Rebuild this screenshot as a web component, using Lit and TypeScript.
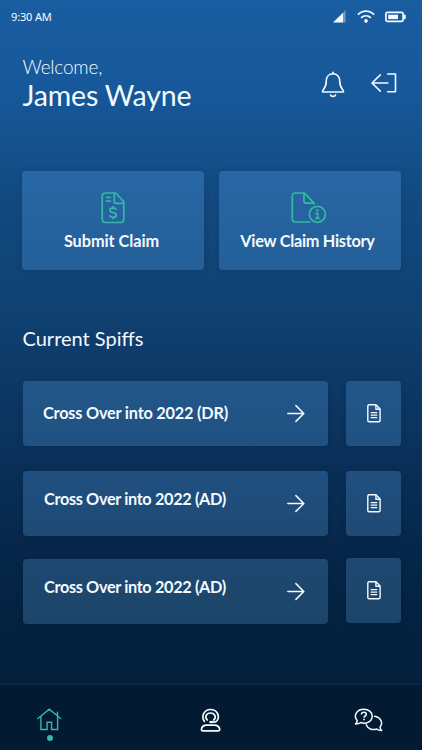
import { LitElement, html, css, svg } from "lit";
import { customElement, property } from "lit/decorators.js";

const icons: Record<string, { w: number; h: number; body: unknown }> = {
  signal: {
    w: 13, h: 13,
    body: svg`<path d="M0 12.500 10 2.700V12.500Z" fill="currentColor"/><path d="M10 2.700 12.600.1V12.500H10Z" fill="currentColor" opacity=".38"/>`,
  },
  wifi: {
    w: 18, h: 13,
    body: svg`<g fill="none" stroke="currentColor" stroke-width="1.8"><path d="M.9 4.700C5.400-.1 12.600-.1 17.100 4.700"/><path d="M4.100 7.900c2.900-2.800 6.900-2.800 9.800 0"/></g><circle cx="9" cy="10.900" r="1.800" fill="currentColor"/>`,
  },
  battery: {
    w: 21, h: 11,
    body: svg`<rect x=".9" y=".4" width="17.200" height="9" rx="1.600" fill="none" stroke="currentColor" stroke-width="1.700"/><path d="M3.200 2.700h9.800v4.400H3.200z" fill="currentColor"/><path d="M18.500 2.500h1.200q1 0 1 1v2.800q0 1-1 1h-1.200z" fill="currentColor"/>`,
  },
  bell: {
    w: 24, h: 27,
    body: svg`<g fill="none" stroke="currentColor" stroke-width="1.600" stroke-linecap="round" stroke-linejoin="round"><path d="M12 2.800c-4 0-6.700 2.900-6.700 6.900 0 5.500-1.200 6.900-2.900 8.900-1.100 1.300-1.300 2.400.1 2.400h19c1.400 0 1.200-1.100.1-2.400-1.700-2-2.900-3.400-2.900-8.900 0-4-2.700-6.900-6.700-6.900Z"/><path d="M12 2.700V1.200"/><path d="M9.500 24c.5 1.900 4.500 1.900 5 0"/></g>`,
  },
  logout: {
    w: 26, h: 20,
    body: svg`<path d="M1 10h15.800M9.300 1.900 1 10l8.300 8.100M16.600 1h7.900v17.700h-7.900" fill="none" stroke="currentColor" stroke-width="1.600" stroke-linecap="round" stroke-linejoin="round"/>`,
  },
  invoice: {
    w: 24, h: 32,
    body: svg`<path d="M4.500 1h10.300L22.800 9.800V27.200q0 3.300-3.300 3.300h-15Q1.200 30.500 1.200 27.200v-22.900Q1.200 1 4.500 1ZM13.300 1.300v9q0 1 1 1H22.700M4.800 5.400h5M4.800 9.200h5" fill="none" stroke="currentColor" stroke-width="1.700" stroke-linejoin="round"/><path d="M15.200 17.800c-.4-1.300-1.700-1.800-3.100-1.800-1.900 0-3.200.9-3.200 2.300 0 3.300 6.500 1.300 6.500 4.700 0 1.500-1.400 2.300-3.300 2.300-1.700 0-3-.7-3.400-2.100M12.100 14v2M12.100 25.300v2" fill="none" stroke="currentColor" stroke-width="1.800"/>`,
  },
  history: {
    w: 36, h: 32,
    body: svg`<g fill="none" stroke="currentColor" stroke-width="1.700" stroke-linejoin="round" stroke-linecap="round"><path d="M18.800 30H4.200Q1.300 30 1.300 27V4q0-3 3-3h9.200L23 11.200v.8M13 1.200v7.500q0 2.500 2.500 2.500h7"/><circle cx="26.400" cy="22.300" r="8"/></g><circle cx="26.300" cy="18.300" r="1.200" fill="currentColor"/><path d="M24.400 21.300h2.200v4.700M24.100 26.300h4.700" fill="none" stroke="currentColor" stroke-width="1.700"/>`,
  },
  arrow: {
    w: 18, h: 18,
    body: svg`<path d="M.8 8.500h15.800M8.900.6l7.900 7.900-7.900 7.900" fill="none" stroke="currentColor" stroke-width="1.500" stroke-linecap="round" stroke-linejoin="round"/>`,
  },
  doc: {
    w: 14, h: 19,
    body: svg`<path d="M2 .8h7l4.100 4.200v11.300q0 1.500-1.200 1.500H2Q.8 17.800.8 16.300V2.200Q.8.800 2 .800ZM8.900 1v4.200h4.200" fill="none" stroke="currentColor" stroke-width="1.400" stroke-linejoin="round"/><path d="M3.700 8.700h6.500M3.700 11.200h6.500M3.700 13.700h6.500" stroke="currentColor" stroke-width="1.200"/>`,
  },
  home: {
    w: 25, h: 23,
    body: svg`<path d="M.9 10.500 12.200 1.200 23.700 10.500M3.900 8.900v12.600h6.200v-7.300h4.500v7.300h6V8.500M20.500 7V4.200" fill="none" stroke="currentColor" stroke-width="1.400" stroke-linejoin="miter" stroke-linecap="round"/>`,
  },
  support: {
    w: 22, h: 25,
    body: svg`<g fill="none" stroke="currentColor" stroke-width="1.700" stroke-linecap="round" stroke-linejoin="round"><path d="M4.400 13.300C.6 8 4.500 1.500 10.600 1.500c6.100 0 9.700 6.200 6.500 11.100-.8 1.200-1.900 1.500-3.300 1.500H11.500"/><path d="M7.300 12C4.300 9.200 6.300 5 10.500 5s6.300 4.300 3.300 7"/><path d="M2.800 22.800h15.400c1.800 0 1.700-1.400 1.200-2.600-.8-2.200-2.400-3.100-4.500-3.100H6c-2.200 0-3.600.9-4.300 3.100-.4 1.200-.7 2.600 1.100 2.600Z"/></g><ellipse cx="11.200" cy="14" rx="2" ry="1.300" fill="currentColor"/>`,
  },
  chat: {
    w: 29, h: 24,
    body: svg`<g fill="none" stroke="currentColor" stroke-width="1.500" stroke-linejoin="round" stroke-linecap="round"><path d="M3.200 12.600C-.9 8 2.500 1.200 9.800 1.200c4.800 0 8.400 3 8.400 7 0 5.200-6 8.400-11.500 6.300-1.400 1.200-3.200 1.700-5.200 1.600 1-1 1.600-2.100 1.700-3.500Z"/><path d="M20.600 8.300c5.900.6 9 6.700 5.400 10.900.1 1.300.7 2.400 1.700 3.200-1.900.1-3.700-.3-5.100-1.400-4.300 1.600-8.700-.1-10.400-4.200"/></g><path d="M7.400 6.500c.1-1.500 1.100-2.200 2.500-2.200s2.400.8 2.400 2c0 1.700-2.300 1.700-2.300 3.400M10 10.800v1.500" fill="none" stroke="currentColor" stroke-width="1.600"/>`,
  },
};

@customElement("ui-icon")
class UiIcon extends LitElement {
  @property() name = "";
  static styles = css`
    :host { display: inline-flex; flex: none; }
    svg { display: block; overflow: visible; }
  `;
  render() {
    const i = icons[this.name];
    return i
      ? html`<svg width=${i.w} height=${i.h} viewBox="0 0 ${i.w} ${i.h}" aria-hidden="true">${i.body}</svg>`
      : null;
  }
}

@customElement("app-root")
class AppRoot extends LitElement {
  static styles = css`
    :host {
      display: flex;
      flex-direction: column;
      box-sizing: border-box;
      height: 750px;
      overflow: hidden;
      color: #f4faff;
      font-family: Lato, sans-serif;
      background: linear-gradient(#195ea1 0, #17589a 90px, #124a80 200px, #0f4070 320px, #0a315a 450px, #06274a 550px, #03203d 650px, #03203c 684px);
    }
    .status {
      display: flex;
      align-items: center;
      height: 34px;
      padding: 0 16px 0 11px;
      font: 11px/34px "Noto Sans", sans-serif;
      letter-spacing: -0.15px;
    }
    .time { flex: 1; }
    .signal { margin: -2px 11px 0 0; }
    .wifi { margin: -1px 10px 0 0; }
    .header {
      display: flex;
      height: 90px;
      padding: 20px 25px 0 23px;
      box-sizing: border-box;
    }
    .greeting { flex: 1; white-space: nowrap; }
    .welcome { font-size: 19px; font-weight: 300; line-height: 26px; letter-spacing: -0.2px; margin-left: -0.5px; }
    .name { font-size: 28.5px; line-height: 32px; letter-spacing: -0.17px; margin: -1px 0 0 -0.5px; }
    .actions { display: flex; gap: 26px; padding-top: 17px; align-items: flex-start; }
    .actions .exit { margin-top: 2px; }
    .tiles {
      display: grid;
      grid-template-columns: 1fr 1fr;
      gap: 15px;
      margin: 46.5px 21px 0 22px;
    }
    .tile, .row, .file {
      border-radius: 4px;
      box-shadow: 0 0 6px rgba(0, 20, 50, 0.14);
    }
    .tile {
      display: flex;
      flex-direction: column;
      align-items: center;
      box-sizing: border-box;
      height: 99.5px;
      padding-top: 21px;
      background: linear-gradient(#2767a5, #245f98);
      font-size: 16.3px;
      font-weight: 700;
      line-height: 20px;
      white-space: nowrap;
    }
    .tile ui-icon { color: #35b8a3; margin-bottom: 7px; }
    .tile span { margin-right: 3px; }
    .tile.submit ui-icon { margin-right: 1px; }
    .tile.submit span { letter-spacing: -0.05px; }
    .tile.view ui-icon { margin-right: 3px; }
    .tile.view span { margin-right: 5px; letter-spacing: -0.27px; }
    h2 { margin: 54px 0 0 22.5px; font-size: 20px; font-weight: 400; line-height: 28px; }
    .list {
      display: grid;
      row-gap: 25px;
      margin: 29px 21px 0 23px;
    }
    .item { display: grid; grid-template-columns: 305px 55px; column-gap: 18.4px; height: 65px; }
    .item.last { margin-top: -2px; }
    .row, .file { display: flex; align-items: center; height: 65px; box-sizing: border-box; }
    .row { padding: 0 23px 0 20px; font-size: 16.3px; font-weight: 700; white-space: nowrap; }
    .label { flex: 1; line-height: 20px; padding-bottom: 2px; letter-spacing: -0.2px; }
    .raised .label { padding: 0 0 9px 1px; letter-spacing: -0.35px; }
    .file { justify-content: center; }
    .tone-0 .row, .tone-0 .file { background: linear-gradient(#22568b, #20517f); }
    .tone-1 .row, .tone-1 .file { background: linear-gradient(#205081, #1e4a73); }
    .tone-2 .row, .tone-2 .file { background: linear-gradient(#1f4872, #1b4568); }
    .last .file { margin-top: -1px; }
    .nav {
      display: flex;
      justify-content: space-between;
      box-sizing: border-box;
      height: 65px;
      margin-top: auto;
      padding: 23px 39px 0 37px;
      background: #041a33;
      box-shadow: 0 -1px 4px rgba(70, 110, 140, 0.22);
    }
    .tab { display: flex; flex-direction: column; align-items: center; }
    .home { color: #35b8a3; }
    .help { margin-left: 5px; }
    .dot { flex: none; width: 6px; height: 6px; border-radius: 50%; background: currentColor; margin-top: 4px; }
  `;

  private items = ["Cross Over into 2022 (DR)", "Cross Over into 2022 (AD)", "Cross Over into 2022 (AD)"];

  render() {
    return html`
      <div class="status">
        <span class="time">9:30 AM</span>
        <ui-icon class="signal" name="signal"></ui-icon>
        <ui-icon class="wifi" name="wifi"></ui-icon>
        <ui-icon name="battery"></ui-icon>
      </div>
      <div class="header">
        <div class="greeting">
          <div class="welcome">Welcome,</div>
          <div class="name">James Wayne</div>
        </div>
        <div class="actions">
          <ui-icon name="bell"></ui-icon>
          <ui-icon class="exit" name="logout"></ui-icon>
        </div>
      </div>
      <div class="tiles">
        <div class="tile submit"><ui-icon name="invoice"></ui-icon><span>Submit Claim</span></div>
        <div class="tile view"><ui-icon name="history"></ui-icon><span>View Claim History</span></div>
      </div>
      <h2>Current Spiffs</h2>
      <div class="list">
        ${this.items.map(
          (label, i) => html`
            <div class="item tone-${i} ${i > 0 ? "raised" : ""} ${i === 2 ? "last" : ""}">
              <div class="row"><span class="label">${label}</span><ui-icon name="arrow"></ui-icon></div>
              <div class="file"><ui-icon name="doc"></ui-icon></div>
            </div>
          `,
        )}
      </div>
      <div class="nav">
        <div class="tab home"><ui-icon name="home"></ui-icon><span class="dot"></span></div>
        <div class="tab help"><ui-icon name="support"></ui-icon></div>
        <div class="tab"><ui-icon name="chat"></ui-icon></div>
      </div>
    `;
  }
}
